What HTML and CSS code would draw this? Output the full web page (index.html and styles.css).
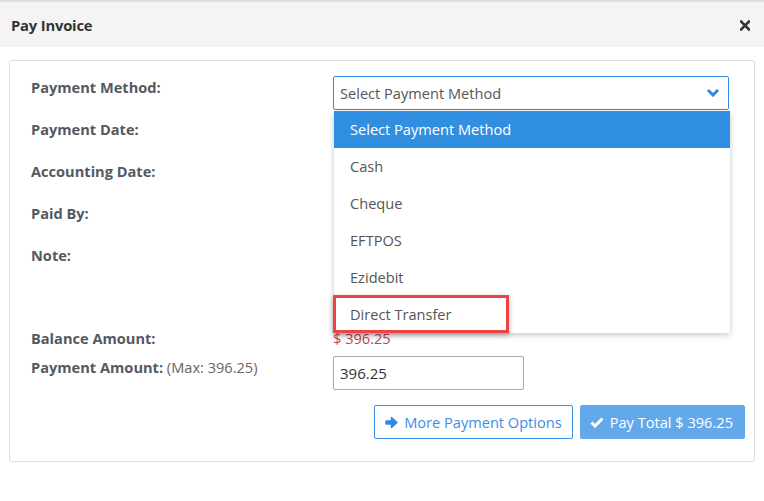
FILE: index.html
```html
<!DOCTYPE html>
<html>
<head>
	<title>Pay Invoice</title>
	<link rel="stylesheet" href="styles.css">
</head>
<body>
	<div class="modal">
		<div class="modal-header">
			<span class="modal-title">Pay Invoice</span>
			<button class="close-btn" aria-label="Close">
				<svg width="10" height="11" viewBox="0 0 10 11"><path d="M1 1.5 L9 9.5 M9 1.5 L1 9.5" stroke="#333" stroke-width="2.6" stroke-linecap="square"/></svg>
			</button>
		</div>

		<div class="panel">
			<!-- payment method with its open list -->
			<div class="form-row">
				<label class="form-label">Payment Method:</label>
				<div class="form-field select-wrap">
					<div class="select-box">
						<span>Select Payment Method</span>
						<svg class="chevron" width="14" height="9" viewBox="0 0 14 9"><path d="M2 2 L7 7 L12 2" fill="none" stroke="#2e8ae6" stroke-width="3"/></svg>
					</div>
					<ul class="dropdown">
						<li class="active">Select Payment Method</li>
						<li>Cash</li>
						<li>Cheque</li>
						<li>EFTPOS</li>
						<li>Ezidebit</li>
						<li class="marked">Direct Transfer<span class="mark"></span></li>
					</ul>
				</div>
			</div>
			<div class="form-row">
				<label class="form-label">Payment Date:</label>
			</div>
			<div class="form-row">
				<label class="form-label">Accounting Date:</label>
			</div>
			<div class="form-row">
				<label class="form-label">Paid By:</label>
			</div>
			<div class="form-row note-row">
				<label class="form-label">Note:</label>
			</div>
			<div class="form-row balance-row">
				<label class="form-label">Balance Amount:</label>
				<div class="form-field balance">$ 396.25</div>
			</div>
			<div class="form-row">
				<label class="form-label">Payment Amount: <span class="hint">(Max: 396.25)</span></label>
				<div class="form-field">
					<input class="amount" type="text" value="396.25">
				</div>
			</div>

			<div class="actions">
				<button class="btn btn-outline">
					<svg width="13" height="13" viewBox="0 0 13 13"><path d="M1 5 H6.5 V1.5 L12 6.5 L6.5 11.5 V8 H1 Z" fill="#2e8ae6" stroke="#2e8ae6" stroke-width="1.4" stroke-linejoin="round"/></svg>
					More Payment Options
				</button>
				<button class="btn btn-primary">
					<svg width="14" height="12" viewBox="0 0 14 12"><path d="M1.5 6.5 L5 10 L12.5 2.5" fill="none" stroke="#fff" stroke-width="3"/></svg>
					Pay Total $ 396.25
				</button>
			</div>
		</div>
	</div>
</body>
</html>
```

FILE: styles.css
```css
* {
	box-sizing: border-box;
}
body {
	margin: 0;
	background: #fff;
	font-family: "Open Sans", "Liberation Sans", sans-serif;
	font-size: 14.6px;
	color: #555;
}

.modal-header {
	display: flex;
	align-items: center;
	justify-content: space-between;
	height: 47px;
	padding: 0 14px 0 11px;
	background: #f4f4f4;
	border-top: 2px solid #dedede;
}
.modal-title {
	font-size: 14.8px;
	font-weight: 700;
	color: #333;
	letter-spacing: -0.2px;
}
.close-btn {
	display: flex;
	background: none;
	border: none;
	padding: 0;
	margin-top: 1px;
}

.panel {
	margin: 13px 9px 0 9px;
	padding: 15px 9px 22px 21px;
	border: 1px solid #ddd;
	border-radius: 3px;
}
.form-row {
	display: flex;
	height: 34px;
	margin-bottom: 8px;
}
.note-row {
	height: 75px;
}
.balance-row {
	height: 21px;
}
.form-label {
	width: 302px;
	padding-top: 1px;
	line-height: 20px;
	font-weight: 700;
	color: #54595f;
}
.hint {
	font-weight: 400;
	color: #666;
}
.form-field {
	width: 396px;
}
.select-wrap {
	position: relative;
}
.select-box {
	display: flex;
	align-items: center;
	justify-content: space-between;
	height: 34px;
	padding: 0 8px 0 6px;
	border: 1px solid #2e8ae6;
	border-radius: 2px;
	color: #555;
}
.chevron {
	margin-top: -1px;
}

.dropdown {
	position: absolute;
	top: 35px;
	left: 1px;
	width: 396px;
	margin: 0;
	padding: 0;
	list-style: none;
	background: #fff;
	box-shadow: 0 2px 6px rgba(0, 0, 0, 0.22);
	z-index: 2;
}
.dropdown li {
	position: relative;
	height: 37px;
	line-height: 37px;
	padding-left: 16px;
	color: #555;
}
.dropdown li.active {
	background: #318fe2;
	color: #fff;
}
.mark {
	position: absolute;
	top: -1px;
	left: -1px;
	width: 176px;
	height: 38px;
	border: 3px solid #f04242;
	box-shadow: 0 2px 5px rgba(0, 0, 0, 0.3);
}

.balance {
	line-height: 20px;
	padding-top: 1px;
	color: #b94a48;
}
.amount {
	width: 191px;
	height: 34px;
	padding: 0 6px;
	border: 1px solid #aaa;
	border-radius: 2px;
	font-family: inherit;
	font-size: 15px;
	color: #333;
}

.actions {
	display: flex;
	justify-content: flex-end;
	gap: 7px;
	margin-top: 15px;
}
.btn {
	display: flex;
	align-items: center;
	gap: 6px;
	height: 34px;
	border-radius: 2px;
	font-family: inherit;
	font-size: 14.6px;
}
.btn-outline {
	padding: 0 10px 0 10px;
	background: #fff;
	border: 1px solid #3a8ee6;
	color: #3a8ee6;
}
.btn-primary {
	padding: 0 11px 0 9px;
	background: #63a9ea;
	border: 1px solid #63a9ea;
	color: #fff;
}
```
